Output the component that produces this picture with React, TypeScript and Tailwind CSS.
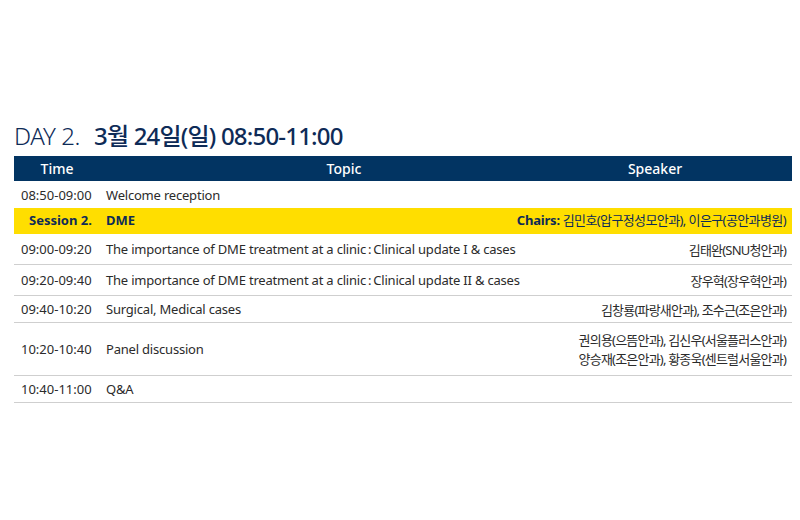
const rows = [
  { time: "09:00-09:20", topic: "The importance of DME treatment at a clinic\u2009:\u2009Clinical update I & cases", speaker: ["김태완(SNU청안과)"], h: "h-[31px]" },
  { time: "09:20-09:40", topic: "The importance of DME treatment at a clinic\u2009:\u2009Clinical update II & cases", speaker: ["장우혁(장우혁안과)"], h: "h-[31px]" },
  { time: "09:40-10:20", topic: "Surgical, Medical cases", speaker: ["김창룡(파랑새안과), 조수근(조은안과)"], h: "h-[27px]" },
  { time: "10:20-10:40", topic: "Panel discussion", speaker: ["권의용(으뜸안과), 김신우(서울플러스안과)", "양승재(조은안과), 황종욱(센트럴서울안과)"], h: "h-[53px]" },
  { time: "10:40-11:00", topic: "Q&A", speaker: [], h: "h-[27px]" },
]

export default function App() {
  return (
    <div className="w-[800px] h-[520px] bg-white pt-[120px] pl-[14px] pr-[8px] font-['Noto_Sans','Noto_Sans_CJK_KR',sans-serif]">
      <h1 className="h-[36px] leading-[32px] text-[24px] text-[#0e2b57] tracking-[-0.4px]">
        <span className="font-light">DAY 2.</span>
        <span className="ml-[14px] font-medium tracking-[-0.8px]">3월 24일(일) 08:50-11:00</span>
      </h1>

      <div className="flex h-[25px] items-center bg-[#023462] text-[14px] font-medium text-white">
        <div className="w-[86px] text-center">Time</div>
        <div className="w-[488px] text-center">Topic</div>
        <div className="w-[134px] text-center">Speaker</div>
      </div>

      <div className="flex h-[27px] items-center pt-[2px] text-[13px] text-[#2b2b2b]">
        <div className="w-[92px] pl-[7px]">08:50-09:00</div>
        <div className="tracking-[-0.2px]">Welcome reception</div>
      </div>

      <div className="flex h-[26px] items-center bg-[#ffde00] text-[13px] text-[#0e2b57]">
        <div className="w-[92px] pl-[15px] font-bold">Session 2.</div>
        <div className="font-bold">DME</div>
        <div className="ml-auto pr-[6px] tracking-[-0.6px]">
          <span className="font-bold tracking-[-0.2px]">Chairs:</span> 김민호(압구정성모안과), 이은구(공안과병원)
        </div>
      </div>

      {rows.map((r) => (
        <div key={r.time} className={`flex items-center border-b border-[#cfcfcf] pt-[2px] text-[13px] text-[#2b2b2b] ${r.h}`}>
          <div className="w-[92px] pl-[7px]">{r.time}</div>
          <div className="tracking-[-0.2px]">{r.topic}</div>
          <div className="ml-auto pr-[6px] text-right leading-[19px] tracking-[-0.8px]">
            {r.speaker.map((s) => (
              <div key={s}>{s}</div>
            ))}
          </div>
        </div>
      ))}
    </div>
  )
}
